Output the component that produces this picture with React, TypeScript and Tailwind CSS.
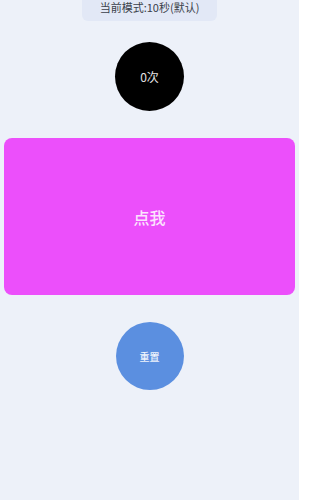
import React from "react";

export default function App() {
  return (
    <div
      className="w-[299px] h-[500px] bg-[#edf1f9] flex flex-col items-center overflow-hidden"
      style={{ fontFamily: '"Noto Sans CJK SC", "Noto Sans", sans-serif' }}
    >
      <div className="w-[135px] h-[21px] bg-[#e2e8f6] rounded-b-[6px] flex items-start justify-center">
        <span className="text-[11px] leading-[14px] text-[#3a3f4a]">当前模式:10秒(默认)</span>
      </div>

      <div className="mt-[21px] w-[69px] h-[69px] rounded-full bg-black flex items-center justify-center">
        <span className="text-[12px] text-[#e5e5e5]">0次</span>
      </div>

      <div className="mt-[27px] w-[291px] h-[157px] rounded-[8px] bg-[#ec4ffb] flex items-center justify-center">
        <span className="text-[16px] font-medium text-[#fbe3fd]">点我</span>
      </div>

      <div className="mt-[27px] w-[68px] h-[68px] rounded-full bg-[#5b8fe0] flex items-center justify-center">
        <span className="text-[10px] font-medium text-[#eef3fc]">重置</span>
      </div>
    </div>
  );
}
